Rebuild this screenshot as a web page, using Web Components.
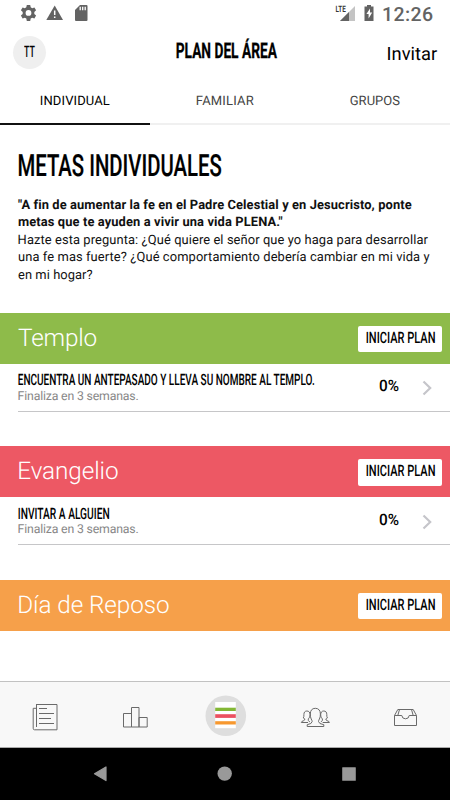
<!DOCTYPE html>
<html lang="es">
<head>
<meta charset="utf-8">
<title>Plan del Área</title>
<style>
html,body{margin:0;padding:0;background:#fff;overflow:hidden}
body{width:450px;height:800px;font-family:Roboto,"Open Sans",sans-serif;color:#000;text-rendering:geometricPrecision}
</style>
</head>
<body>
<plan-app></plan-app>
<script>
const ctx = document.createElement('canvas').getContext('2d');

/* Text line whose ink spans the given width; "narrow" condenses the glyphs, otherwise tracking is adjusted. */
class FitText extends HTMLElement {
  connectedCallback() {
    if (this.shadowRoot) return;
    const text = this.getAttribute('text');
    const size = +this.getAttribute('size');
    const w = +this.getAttribute('w');
    const weight = this.getAttribute('weight') || 400;
    const lh = +(this.getAttribute('lh') || Math.round(size * 1.25));
    ctx.font = `${weight} ${size}px Roboto, "Open Sans", sans-serif`;
    ctx.textRendering = 'geometricPrecision';
    const m = ctx.measureText(text);
    const left = -m.actualBoundingBoxLeft * 0.4, ink = m.actualBoundingBoxRight - left;
    let css;
    if (this.hasAttribute('narrow')) {
      const s = w / ink;
      css = `transform-origin:0 50%;transform:translateX(${-left * s}px) scaleX(${s});-webkit-text-stroke:${this.getAttribute('stroke') || 0}px currentColor`;
    } else {
      css = `margin-left:${-left}px;letter-spacing:${(w - ink) / (text.length - 1)}px`;
    }
    this.attachShadow({mode: 'open'}).innerHTML = `<style>
      :host{display:block;flex:none;width:${w}px;height:${lh}px;font-size:${size}px;font-weight:${weight};line-height:${lh}px;white-space:nowrap}
      span{display:inline-block;vertical-align:top;${css}}
    </style><span></span>`;
    this.shadowRoot.querySelector('span').textContent = text;
  }
}
customElements.define('fit-text', FitText);

function define(name, html) {
  const t = document.createElement('template');
  t.innerHTML = typeof html === 'string' ? html : '';
  customElements.define(name, class extends HTMLElement {
    connectedCallback() {
      if (this.shadowRoot) return;
      const r = this.attachShadow({mode: 'open'});
      if (typeof html === 'function') t.innerHTML = html(this);
      r.appendChild(t.content.cloneNode(true));
    }
  });
}

define('status-bar', `<style>
  :host{display:flex;height:28px;box-sizing:border-box;justify-content:space-between;color:#636363}
  svg{display:block}
</style>
<svg width="100" height="28" viewBox="0 0 100 28">
  <path fill="#636363" fill-rule="evenodd" d="M26.8 5h3.4l.5 2.3 1.5.9 2.2-.8 1.7 2.9-1.8 1.6v2.1l1.8 1.6-1.7 2.9-2.2-.8-1.5.9-.5 2.3h-3.4l-.5-2.3-1.5-.9-2.2.8-1.7-2.9 1.8-1.6v-2.1l-1.8-1.6 1.7-2.9 2.2.8 1.5-.9zM28.5 10a2.9 2.9 0 1 0 0 5.800 2.9 2.900 0 0 0 0-5.800z"/>
  <path fill="#636363" d="M54.700 5.500 63 20H46.300z"/><path stroke="#fff" stroke-width="1.500" d="M54.700 10.500v4.500M54.700 16.500v1.500"/>
  <path fill="#636363" d="M80 5h6.500q1 0 1 1v14q0 1-1 1h-10.500q-1 0-1-1V10z"/><path stroke="#fff" stroke-width="1.300" d="M80.200 6.700v3.500M82.700 6.700v3.500M85.200 6.700v3.500"/>
</svg>
<svg width="125" height="28" viewBox="325 0 125 28">
  <text x="335.600" y="12" font-family="Roboto,sans-serif" font-size="8.800" font-weight="600" fill="#333" textLength="10.200" lengthAdjust="spacingAndGlyphs">LTE</text>
  <path fill="#c4c4c4" d="M355 6v15h-15z"/><path fill="#636363" d="M349 12v9h-9z"/>
  <path fill="#636363" d="M367 5h4v1.500h2.500V21h-9V6.500h2.500z"/><path fill="#fff" d="M370 8.500v4h2.200l-3.600 6v-4.500h-2.200z"/>
  <text x="382" y="21" font-family="Roboto,sans-serif" font-size="19.500" font-weight="500" fill="#636363" textLength="51" lengthAdjust="spacing">12:26</text>
</svg>`);

define('app-header', `<style>
  :host{display:grid;grid-template-columns:13px 33px 129.500px 101.500px 110px 51px;height:52px;align-items:start}
  .av{grid-column:2;margin-top:8px;width:33px;height:33px;border-radius:50%;background:#efefef;display:flex;justify-content:center;box-sizing:border-box;padding-top:5.600px}
  .t{grid-column:4;margin-top:9.600px}.i{grid-column:6;margin-top:15px}
</style>
<div class="av"><fit-text narrow text="TT" size="16" lh="20" w="11" weight="500"></fit-text></div>
<fit-text class="t" narrow text="PLAN DEL ÁREA" size="21.600" lh="27" w="101.200" weight="700" stroke="0.300"></fit-text>
<fit-text class="i" text="Invitar" size="18.300" lh="24" w="50"></fit-text>`);

define('tab-bar', `<style>
  :host{display:grid;grid-template-columns:repeat(3,150px);height:44.500px}
  div{display:flex;justify-content:center;padding-top:14px;box-sizing:border-box;border-bottom:2px solid #f0f0f0;color:#444}
  .on{color:#000;border-color:#111}
</style>
<div class="on"><fit-text text="INDIVIDUAL" size="13" lh="16" w="69.500"></fit-text></div>
<div><fit-text text="FAMILIAR" size="13" lh="16" w="57.500"></fit-text></div>
<div><fit-text text="GRUPOS" size="13" lh="16" w="50.500"></fit-text></div>`);

define('plan-intro', `<style>
  :host{display:block;box-sizing:border-box;height:188.500px;padding:24.500px 0 0 18px}
  .b{margin-top:11.500px;color:#111}
</style>
<fit-text narrow text="METAS INDIVIDUALES" size="30.500" lh="36" w="203.500" weight="500" stroke="0.200"></fit-text>
<div class="b">
<fit-text text='"A fin de aumentar la fe en el Padre Celestial y en Jesucristo, ponte' size="12.900" lh="17.550" w="393.500" weight="700"></fit-text>
<fit-text text='metas que te ayuden a vivir una vida PLENA."' size="12.900" lh="17.550" w="264.500" weight="700"></fit-text>
<fit-text text="Hazte esta pregunta: ¿Qué quiere el señor que yo haga para desarrollar" size="12.900" lh="17.550" w="410.500"></fit-text>
<fit-text text="una fe mas fuerte? ¿Qué comportamiento debería cambiar en mi vida y" size="12.900" lh="17.550" w="411.500"></fit-text>
<fit-text text="en mi hogar?" size="12.900" lh="17.550" w="74.500"></fit-text>
</div>`);

define('plan-section', h => `<style>
  :host{display:block;height:133.400px}
  header{display:flex;justify-content:space-between;height:51px;box-sizing:border-box;padding:0 8px 0 18px;background:${h.getAttribute('color')};color:#fff}
  header>fit-text{margin-top:9px}
  .btn{width:84px;height:26.500px;margin-top:12.800px;background:#fff;border-radius:2px;color:#000;display:flex;justify-content:center;padding-top:2px;box-sizing:border-box}
</style>
<header><fit-text text="${h.getAttribute('name')}" size="24.300" lh="31" w="${h.getAttribute('w')}" weight="300"></fit-text>
<div class="btn"><fit-text narrow text="INICIAR PLAN" size="15.700" lh="20" w="68.700" weight="500"></fit-text></div></header>
<slot></slot>`);

define('plan-goal', h => `<style>
  :host{display:flex;justify-content:space-between;margin-left:18px;height:48px;box-sizing:border-box;border-bottom:1px solid #c6c6c8}
  .l{padding-top:6.300px}.l fit-text+fit-text{color:#888;margin-top:-.5px}
  .r{display:flex;align-items:flex-start;padding:12.300px 18px 0 0;gap:23.500px}
  svg{display:block;margin-top:4px}
</style>
<div class="l"><fit-text narrow text="${h.getAttribute('name')}" size="15.700" lh="20" w="${h.getAttribute('w')}" weight="500"></fit-text>
<fit-text text="Finaliza en 3 semanas." size="12.300" lh="14" w="120.500"></fit-text></div>
<div class="r"><fit-text narrow text="0%" size="15.700" lh="20" w="19.500" weight="500"></fit-text>
<svg width="10" height="16" viewBox="0 0 10 16"><path d="M1.500 1.500 8.200 8l-6.700 6.500" fill="none" stroke="#c5c5ca" stroke-width="2.200"/></svg></div>`);

define('bottom-tabs', `<style>
  :host{display:grid;grid-template-columns:repeat(5,90px);height:67px;box-sizing:border-box;border-top:1px solid #c2c2c2;border-bottom:1px solid #aaa;background:#f8f8f8}
  svg{display:block;width:90px;height:65px}
  g{fill:none;stroke:#6a6a6a;stroke-width:1}
</style>
<svg viewBox="0 682 90 65"><g><path d="M36.500 704.500h20.500v25.300H34.500q-1.300 0-1.300-1.500v-20h3.300"/><path d="M36.500 704v23"/><path d="M39 708.500h8M39 713.500h15M39 718.500h12M39 723.500h15" /></g></svg>
<svg viewBox="90 682 90 65"><g><path d="M123.500 713.500h8v13.500h-8zM131.500 707.500h7.500v19.500h-7.500zM139 717.500h8.200v9.500h-8.200z"/></g></svg>
<svg viewBox="180 682 90 65"><circle cx="225.800" cy="715.800" r="20.300" fill="#dedede"/><path fill="#fff" d="M215.200 702h20.600v26.200h-20.600z"/><path fill="#83b735" d="M215.200 707.700h20.600v3.300h-20.600z"/><path fill="#eb5060" d="M215.200 714.200h20.600v3.700h-20.600z"/><path fill="#f7982f" d="M215.200 721.200h20.600v3.300h-20.600z"/></svg>
<svg viewBox="270 682 90 65"><g><path d="M307.200 726.500v-1.800q4.800-.8 5-3.200-.2-1.300-1-2.500-1-2-.9-5c0-3.500 1.700-5.700 5-5.700s5.100 2.200 5.100 5.700q.1 3-1 5-.8 1.200-.9 2.500.2 2.400 5.300 3.200v1.800z"/>
<path d="M308 722.500h-6.700q0-1.200 2.500-1.900 1.200-.4 1-1.700-1-.4-1.500-.9.800-1.500.6-3.400c0-2.300 1-3.600 3-3.600s3.100 1.300 3.100 3.600-.6 3.200-1.700 4.300v1.500q.2.900 1.600 1.400"/>
<path d="M322.700 722.500h6.700q0-1.200-2.500-1.900-1.200-.4-1-1.700 1-.4 1.500-.9-.8-1.500-.6-3.400c0-2.300-1-3.600-3-3.600s-3.100 1.300-3.100 3.600.6 3.200 1.700 4.300v1.500q-.2.900-1.600 1.400"/></g></svg>
<svg viewBox="360 682 90 65"><g><path d="M394.500 715.500h7.300q.3 3.300 3.700 3.300t3.700-3.300h7.300v10h-22zM394.500 715.500l3.300-6h15.400l3.300 6M399.500 709.500l-1.700 6M411.500 709.500l1.700 6" /></g></svg>`);

define('system-nav', `<style>
  :host{display:grid;grid-template-columns:163px 124px 163px;height:52px;background:#000}
  svg{display:block;width:100%;height:52px}
</style>
<svg viewBox="0 748 163 52"><path d="M94.500 773.800 106 767v13.600z" fill="#999" stroke="#999" stroke-width="1.200" stroke-linejoin="round"/></svg>
<svg viewBox="163 748 124 52"><circle cx="224.700" cy="773.600" r="7.200" fill="#999"/></svg>
<svg viewBox="287 748 163 52"><rect x="342.200" y="767.200" width="13.600" height="13.500" rx=".5" fill="#999"/></svg>`);

define('plan-app', `<style>
  :host{display:flex;flex-direction:column;width:450px;height:800px;background:#fff}
  main{flex:1;min-height:0;overflow:hidden}
</style>
<status-bar></status-bar><app-header></app-header><tab-bar></tab-bar>
<main><plan-intro></plan-intro>
<plan-section color="#8ebb4a" name="Templo" w="78.500"><plan-goal name="ENCUENTRA UN ANTEPASADO Y LLEVA SU NOMBRE AL TEMPLO." w="296.500"></plan-goal></plan-section>
<plan-section color="#ed5864" name="Evangelio" w="100"><plan-goal name="INVITAR A ALGUIEN" w="91"></plan-goal></plan-section>
<plan-section color="#f6a04a" name="Día de Reposo" w="151"></plan-section></main>
<bottom-tabs></bottom-tabs><system-nav></system-nav>`);
</script>
</body>
</html>
